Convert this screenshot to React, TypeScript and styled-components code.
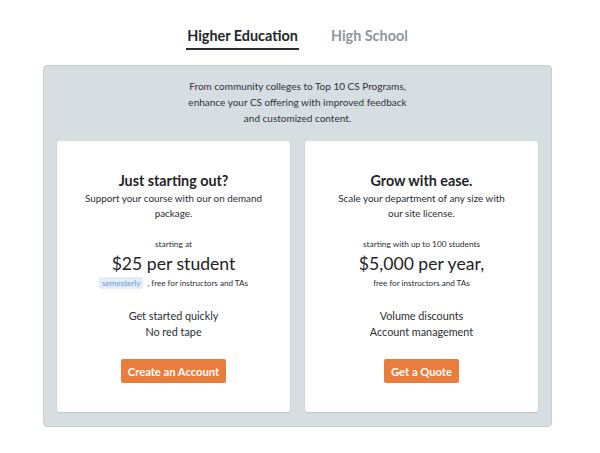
import React from "react"
import styled, { createGlobalStyle } from "styled-components"

const GlobalStyle = createGlobalStyle`
  html, body {
    margin: 0;
    padding: 0;
    background: #ffffff;
  }
  body {
    font-family: Lato, "Open Sans", sans-serif;
    color: #2a2e33;
  }
`

const Page = styled.div`
  width: 600px;
  height: 453px;
  display: flex;
  flex-direction: column;
  align-items: center;
  padding: 26px 5px 0 0;
  box-sizing: border-box;
`

const Tabs = styled.div`
  display: flex;
  gap: 31px;
  height: 39px;
`

const Tab = styled.div<{ $active?: boolean }>`
  font-size: 14.4px;
  font-weight: 700;
  line-height: 20px;
  height: 22px;
  color: ${props => (props.$active ? "#23272b" : "#8f979c")};
  border-bottom: 2px solid ${props => (props.$active ? "#2a2e33" : "transparent")};
  padding: 0 1px;
`

const Panel = styled.div`
  width: 509px;
  height: 362px;
  box-sizing: border-box;
  background: #d6dee1;
  border: 1px solid #c7d0d4;
  border-radius: 4px;
  padding: 12px 13px 0;
  display: flex;
  flex-direction: column;
  align-items: center;
`

const Intro = styled.p`
  margin: 0;
  font-size: 10px;
  line-height: 16px;
  text-align: center;
  color: #2f3337;
  width: 300px;
`

const Cards = styled.div`
  margin-top: 15px;
  display: grid;
  grid-template-columns: 233px 233px;
  gap: 15px;
`

const Card = styled.div`
  height: 271px;
  background: #ffffff;
  border-radius: 3px;
  box-shadow: 0 1px 2px rgba(0, 0, 0, 0.12);
  display: flex;
  flex-direction: column;
  align-items: center;
  padding-top: 30px;
  box-sizing: border-box;
  text-align: center;
`

const Title = styled.h2`
  margin: 0;
  font-size: 14.3px;
  font-weight: 700;
  line-height: 20px;
  color: #1f2327;
`

const Sub = styled.p`
  margin: 0;
  font-size: 9.9px;
  line-height: 15px;
  width: 200px;
`

const Starting = styled.div`
  margin-top: 17px;
  font-size: 8.3px;
  line-height: 12px;
`

const Price = styled.div`
  font-size: 17.6px;
  line-height: 24px;
  margin-top: 2px;
  color: #1f2327;
`

const Note = styled.div`
  font-size: 8.1px;
  line-height: 12px;
  margin-top: 1px;
`

const Tag = styled.span`
  background: #e3ecf7;
  color: #6f9bd8;
  border-radius: 2px;
  padding: 1px 3px;
  margin-right: 2px;
`

const Features = styled.div`
  margin-top: 19px;
  font-size: 10.8px;
  line-height: 16px;
`

const Button = styled.button`
  margin-top: 19px;
  background: #e87d3e;
  color: #ffffff;
  border: none;
  border-radius: 2px;
  font-family: inherit;
  font-weight: 700;
  font-size: 11.2px;
  height: 24px;
  padding: 0 7px;
  cursor: pointer;
`

const App = () => {
  return (
    <Page>
      <GlobalStyle />
      <Tabs>
        <Tab $active>Higher Education</Tab>
        <Tab>High School</Tab>
      </Tabs>
      <Panel>
        <Intro>
          From community colleges to Top 10 CS Programs,
          <br />
          enhance your CS offering with improved feedback
          <br />
          and customized content.
        </Intro>
        <Cards>
          <Card>
            <Title>Just starting out?</Title>
            <Sub>
              Support your course with our on demand
              <br />
              package.
            </Sub>
            <Starting>starting at</Starting>
            <Price>$25 per student</Price>
            <Note>
              <Tag>semesterly</Tag> , free for instructors and TAs
            </Note>
            <Features>
              Get started quickly
              <br />
              No red tape
            </Features>
            <Button>Create an Account</Button>
          </Card>
          <Card>
            <Title>Grow with ease.</Title>
            <Sub>
              Scale your department of any size with
              <br />
              our site license.
            </Sub>
            <Starting>starting with up to 100 students</Starting>
            <Price>$5,000 per year,</Price>
            <Note>free for instructors and TAs</Note>
            <Features>
              Volume discounts
              <br />
              Account management
            </Features>
            <Button>Get a Quote</Button>
          </Card>
        </Cards>
      </Panel>
    </Page>
  )
}

export default App
